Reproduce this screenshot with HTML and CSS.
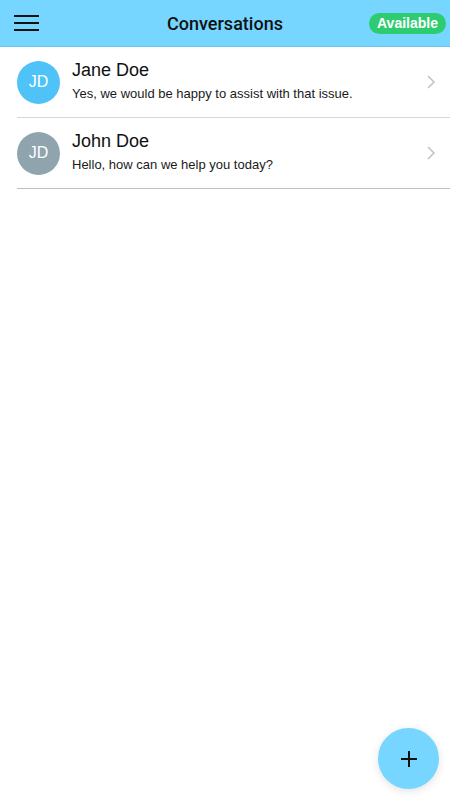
FILE: index.html
```html
<!DOCTYPE html>
<html lang="en">
<head>
    <meta charset="UTF-8">
    <meta name="viewport" content="width=device-width, initial-scale=1.0">
    <title>Conversations</title>
    <link rel="stylesheet" href="styles.css">
</head>
<body>

<div class="header">
    <div class="menu">
        <span></span>
        <span></span>
        <span></span>
    </div>
    <h1>Conversations</h1>
    <div class="right">
        <div class="status">Available</div>
    </div>
</div>

<div class="list">
    <div class="row">
        <div class="avatar blue">JD</div>
        <div class="text">
            <div class="name">Jane Doe</div>
            <div class="message">Yes, we would be happy to assist with that issue.</div>
        </div>
        <svg class="chevron" width="10" height="16" viewBox="0 0 10 16">
            <path d="M2 2 L8 8 L2 14" fill="none" stroke="#c4c4c8" stroke-width="1.6"/>
        </svg>
    </div>
    <div class="row">
        <div class="avatar grey">JD</div>
        <div class="text">
            <div class="name">John Doe</div>
            <div class="message">Hello, how can we help you today?</div>
        </div>
        <svg class="chevron" width="10" height="16" viewBox="0 0 10 16">
            <path d="M2 2 L8 8 L2 14" fill="none" stroke="#c4c4c8" stroke-width="1.6"/>
        </svg>
    </div>
</div>

<div class="fab">
    <svg width="18" height="18" viewBox="0 0 18 18">
        <path d="M9 1 V17 M1 9 H17" stroke="#111" stroke-width="2"/>
    </svg>
</div>

</body>
</html>
```

FILE: styles.css
```css
body {
    margin: 0;
    font-family: "Liberation Sans", Arial, sans-serif;
    background-color: #FFFFFF;
    color: #111;
    height: 800px;
    position: relative;
    overflow: hidden;
}

.header {
    height: 46px;
    background-color: #76D6FF; /* light sky blue */
    border-bottom: 1px solid #6CC3E6;
    display: grid;
    grid-template-columns: 1fr auto 1fr;
    align-items: center;
    padding: 0 4px;
}

.menu {
    width: 25px;
    margin-left: 10px;
    display: flex;
    flex-direction: column;
    gap: 5px;
}

.menu span {
    display: block;
    height: 2px;
    background-color: #111;
}

.header h1 {
    margin: 0;
    font-family: Roboto, "Liberation Sans", sans-serif;
    font-size: 18px;
    font-weight: 500;
    color: #111;
}

.right {
    display: flex;
    justify-content: flex-end;
}

.status {
    background-color: #2ECC71; /* green */
    color: #FFFFFF;
    font-weight: bold;
    font-size: 14px;
    padding: 2px 8px;
    border-radius: 11px;
    line-height: 17px;
}

.list {
    padding-left: 17px;
}

.row {
    display: flex;
    align-items: center;
    height: 70px;
    border-bottom: 1px solid #D6D6D6;
}

.row + .row {
    border-bottom-color: #BDBDBD;
}

.avatar {
    width: 43px;
    height: 43px;
    border-radius: 50%;
    display: flex;
    justify-content: center;
    align-items: center;
    color: #FFFFFF;
    font-size: 16px;
    flex-shrink: 0;
}

.avatar.blue {
    background-color: #4FC3F7;
}

.avatar.grey {
    background-color: #90A4AE;
}

.text {
    flex: 1;
    margin-left: 12px;
    margin-top: -5px;
}

.name {
    font-size: 18px;
    line-height: 22px;
}

.message {
    font-size: 13px;
    margin-top: 5px;
    color: #1A1A1A;
}

.chevron {
    margin-right: 14px;
}

.fab {
    position: absolute;
    left: 378px;
    top: 728px;
    width: 61px;
    height: 61px;
    border-radius: 50%;
    background-color: #76D6FF;
    box-shadow: 0 2px 8px rgba(0, 0, 0, 0.12);
    display: flex;
    justify-content: center;
    align-items: center;
}
```
